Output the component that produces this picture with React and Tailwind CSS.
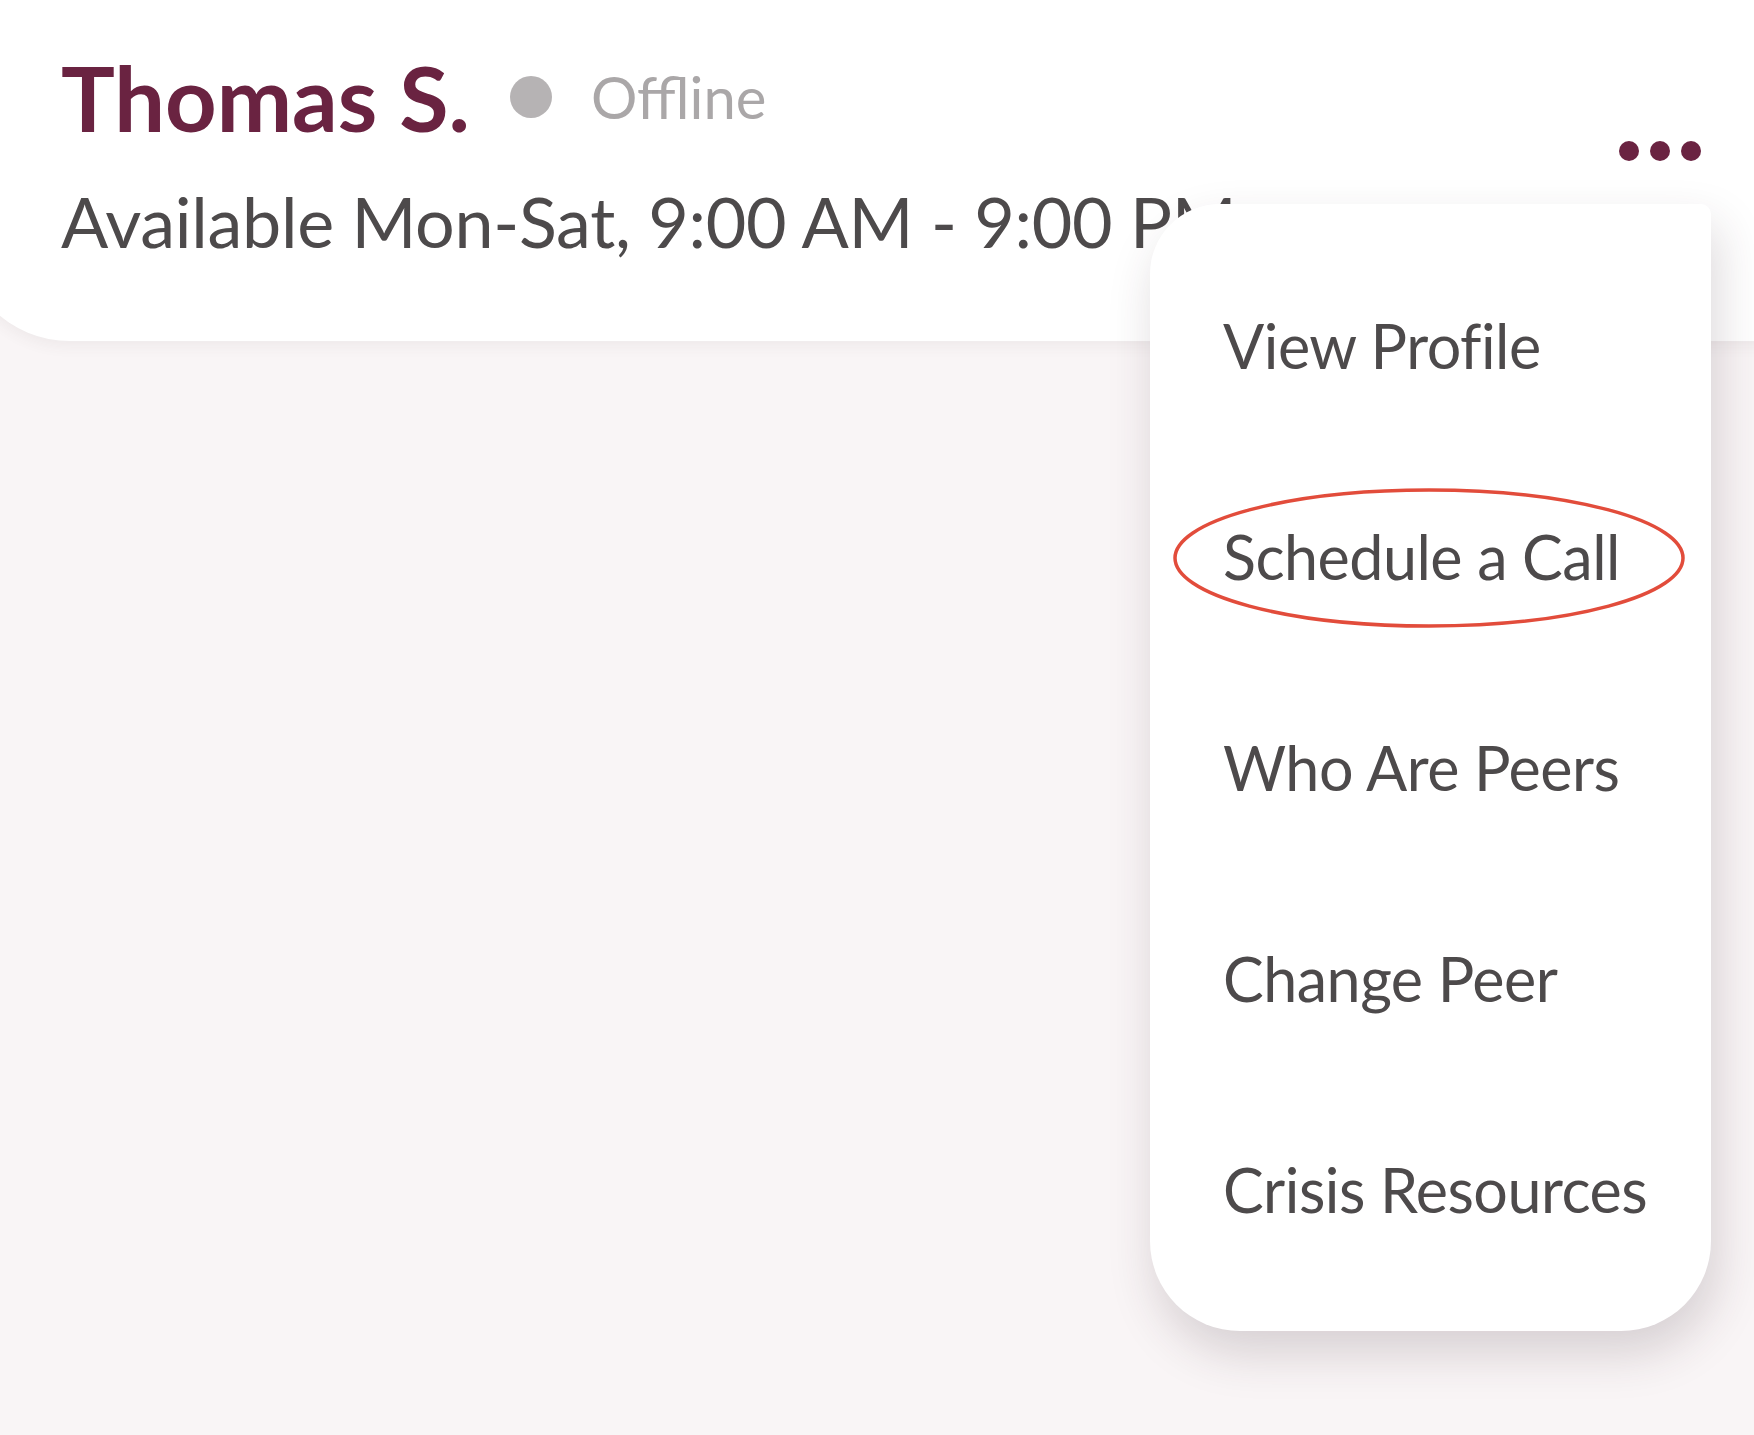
import React from 'react';

const items = ['View Profile', 'Schedule a Call', 'Who Are Peers', 'Change Peer', 'Crisis Resources'];

export default function App() {
  return (
    <div className="relative w-full h-[1435px] overflow-hidden bg-[#f9f5f6] font-['Lato',sans-serif]">
      {/* Header card */}
      <div className="ml-[-40px] mr-[-40px] h-[341px] bg-white rounded-bl-[110px] shadow-[0_6px_14px_rgba(80,60,70,0.06)] pl-[101px] pr-[93px] flex justify-between">
        <div className="pt-[52px]">
          <div className="flex items-center">
            <span className="text-[90px] leading-none font-bold text-[#6a2341]">Thomas S.</span>
            <span className="ml-[40px] w-[42px] h-[42px] rounded-full bg-[#b6b3b4]" />
            <span className="ml-[39px] text-[58px] leading-none text-[#aaa7a8]">Offline</span>
          </div>
          <div className="mt-[44px] text-[70px] leading-none tracking-[-0.3px] text-[#4d4a4b] whitespace-nowrap">
            Available Mon-Sat, 9:00 AM - 9:00 PM
          </div>
        </div>
        <div className="pt-[141px] flex gap-[11px] h-fit">
          <span className="w-[20px] h-[20px] rounded-full bg-[#6a2341]" />
          <span className="w-[20px] h-[20px] rounded-full bg-[#6a2341]" />
          <span className="w-[20px] h-[20px] rounded-full bg-[#6a2341]" />
        </div>
      </div>

      {/* Dropdown menu */}
      <div className="absolute left-[1150px] top-[204px] w-[561px] h-[1127px] bg-white rounded-tl-[70px] rounded-tr-[10px] rounded-b-[90px] shadow-[6px_22px_48px_rgba(60,40,50,0.18)] pl-[73px] pt-[36px]">
        {items.map((t) => (
          <div key={t} className="text-[61px] leading-[211px] tracking-[-0.5px] text-[#4d4a4b] whitespace-nowrap">
            {t}
          </div>
        ))}
      </div>

      {/* Red annotation ellipse */}
      <svg className="absolute left-[1171px] top-[486px]" width="516" height="144" viewBox="0 0 516 144">
        <ellipse cx="258" cy="72" rx="254" ry="68" fill="none" stroke="#e24c3b" strokeWidth="3.5" />
      </svg>
    </div>
  );
}
